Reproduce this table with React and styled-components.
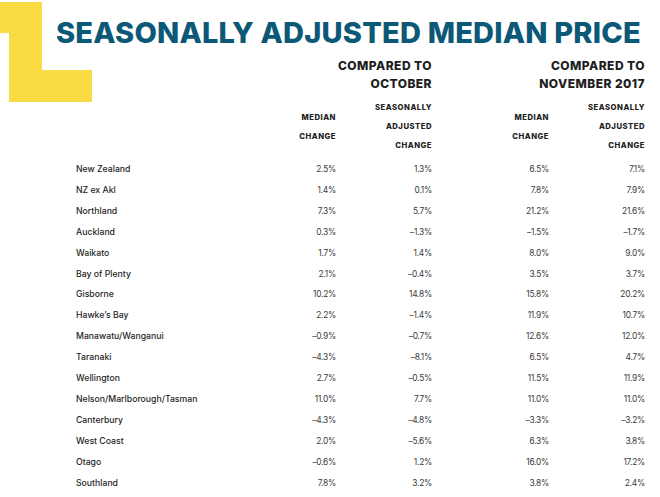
import React from 'react';
import styled, { createGlobalStyle } from 'styled-components';

const GlobalStyle = createGlobalStyle`
  html, body {
    margin: 0;
    padding: 0;
    background: #ffffff;
  }
  body {
    font-family: Inter, "Liberation Sans", Arial, sans-serif;
  }
`;

const COLS = '76px 200px 60px 96px 117px 96px';

const Page = styled.div`
  width: 660px;
  height: 497px;
  overflow: hidden;
  background: #ffffff;
  display: flex;
  flex-direction: column;
`;

const Hero = styled.header`
  display: grid;
  grid-template-columns: ${COLS};
  grid-template-rows: 57px auto auto;
`;

const Mark = styled.svg`
  grid-column: 1 / 3;
  grid-row: 1 / 4;
  align-self: start;
  display: block;
`;

const Title = styled.h1`
  grid-column: 1 / -1;
  grid-row: 1;
  margin: 0;
  padding: 18px 0 0 56px;
  font-family: Inter, "Liberation Sans", sans-serif;
  font-weight: 800;
  font-size: 29px;
  line-height: 29px;
  letter-spacing: 0.2px;
  color: #0c5877;
  white-space: nowrap;
`;

const Group = styled.div`
  grid-row: 2;
  grid-column: ${(p) => p.$span};
  text-align: right;
  font-weight: 800;
  font-size: 12px;
  line-height: 18px;
  letter-spacing: 0.45px;
  color: #1d1d1d;
  padding-bottom: 5px;
`;

const SubHead = styled.div`
  grid-row: 3;
  grid-column: ${(p) => p.$col};
  align-self: center;
  text-align: right;
  font-weight: 800;
  font-size: 7.7px;
  line-height: 19px;
  letter-spacing: 0.5px;
  color: #222222;
`;

const Body = styled.div`
  display: flex;
  flex-direction: column;
  margin-top: 3.5px;
`;

const Row = styled.div`
  display: grid;
  grid-template-columns: ${COLS};
  height: 20.93px;
  align-items: center;
`;

const Name = styled.div`
  grid-column: 2;
  font-weight: 500;
  font-size: 8.7px;
  color: #262626;
  white-space: nowrap;
`;

const Value = styled.div`
  text-align: right;
  font-weight: 400;
  font-size: 8.4px;
  letter-spacing: -0.25px;
  color: #3a3a3a;
`;

const rows = [
  ['New Zealand', '2.5%', '1.3%', '6.5%', '7.1%'],
  ['NZ ex Akl', '1.4%', '0.1%', '7.8%', '7.9%'],
  ['Northland', '7.3%', '5.7%', '21.2%', '21.6%'],
  ['Auckland', '0.3%', '–1.3%', '–1.5%', '–1.7%'],
  ['Waikato', '1.7%', '1.4%', '8.0%', '9.0%'],
  ['Bay of Plenty', '2.1%', '–0.4%', '3.5%', '3.7%'],
  ['Gisborne', '10.2%', '14.8%', '15.8%', '20.2%'],
  ['Hawke’s Bay', '2.2%', '–1.4%', '11.9%', '10.7%'],
  ['Manawatu/Wanganui', '–0.9%', '–0.7%', '12.6%', '12.0%'],
  ['Taranaki', '–4.3%', '–8.1%', '6.5%', '4.7%'],
  ['Wellington', '2.7%', '–0.5%', '11.5%', '11.9%'],
  ['Nelson/Marlborough/Tasman', '11.0%', '7.7%', '11.0%', '11.0%'],
  ['Canterbury', '–4.3%', '–4.8%', '–3.3%', '–3.2%'],
  ['West Coast', '2.0%', '–5.6%', '6.3%', '3.8%'],
  ['Otago', '–0.6%', '1.2%', '16.0%', '17.2%'],
  ['Southland', '7.8%', '3.2%', '3.8%', '2.4%'],
];

const SeasonalMark = () => (
  <Mark width="92" height="102" viewBox="0 0 92 102">
    <polygon points="0,2 42,2 42,70 92,70 92,102 9,102 9,33 0,33" fill="#f9dc43" />
  </Mark>
);

const MedianHead = ({ col }) => (
  <SubHead $col={col}>
    MEDIAN
    <br />
    CHANGE
  </SubHead>
);

const AdjustedHead = ({ col }) => (
  <SubHead $col={col}>
    SEASONALLY
    <br />
    ADJUSTED
    <br />
    CHANGE
  </SubHead>
);

export default function App() {
  return (
    <Page>
      <GlobalStyle />
      <Hero>
        <SeasonalMark />
        <Title>SEASONALLY ADJUSTED MEDIAN PRICE</Title>
        <Group $span="3 / 5">
          COMPARED TO
          <br />
          OCTOBER
        </Group>
        <Group $span="5 / 7">
          COMPARED TO
          <br />
          NOVEMBER 2017
        </Group>
        <MedianHead col={3} />
        <AdjustedHead col={4} />
        <MedianHead col={5} />
        <AdjustedHead col={6} />
      </Hero>
      <Body>
        {rows.map(([name, ...values]) => (
          <Row key={name}>
            <Name>{name}</Name>
            {values.map((v, i) => (
              <Value key={i}>{v}</Value>
            ))}
          </Row>
        ))}
      </Body>
    </Page>
  );
}
